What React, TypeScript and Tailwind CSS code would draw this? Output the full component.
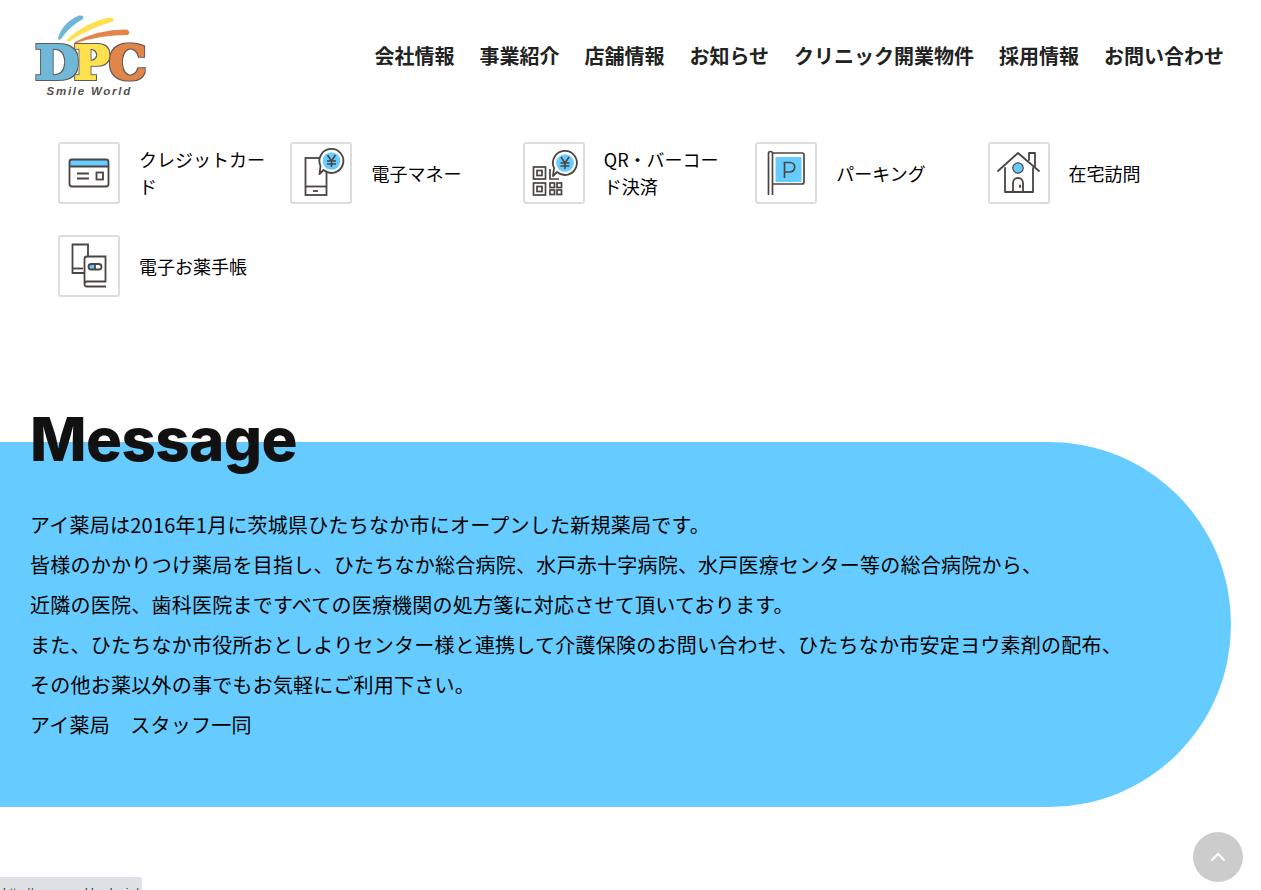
import React from 'react';

const navItems = ['会社情報', '事業紹介', '店舗情報', 'お知らせ', 'クリニック開業物件', '採用情報', 'お問い合わせ'];

const messageLines = [
  'アイ薬局は2016年1月に茨城県ひたちなか市にオープンした新規薬局です。',
  '皆様のかかりつけ薬局を目指し、ひたちなか総合病院、水戸赤十字病院、水戸医療センター等の総合病院から、',
  '近隣の医院、歯科医院まですべての医療機関の処方箋に対応させて頂いております。',
  'また、ひたちなか市役所おとしよりセンター様と連携して介護保険のお問い合わせ、ひたちなか市安定ヨウ素剤の配布、',
  'その他お薬以外の事でもお気軽にご利用下さい。',
  'アイ薬局　スタッフ一同',
];

const ink = '#4a4442';
const blue = '#66ccff';

const YenBubble: React.FC<{ cx: number; cy: number }> = ({ cx, cy }) => (
  <g>
    <path
      d={`M${cx - 8} ${cy + 9} A12 12 0 1 0 ${cx - 11} ${cy + 5} L${cx - 12} ${cy + 13} Z`}
      fill="#fff"
      stroke={ink}
      strokeWidth="1.8"
      strokeLinejoin="round"
    />
    <circle cx={cx} cy={cy} r="8.8" fill={blue} />
    <path
      d={`M${cx - 4} ${cy - 6} L${cx} ${cy} L${cx + 4} ${cy - 6} M${cx} ${cy} V${cy + 6} M${cx - 4.5} ${cy} H${cx + 4.5} M${cx - 4.5} ${cy + 3} H${cx + 4.5}`}
      fill="none"
      stroke={ink}
      strokeWidth="1.6"
    />
  </g>
);

const CardIcon = () => (
  <g fill="none" stroke={ink} strokeWidth="1.8">
    <path d="M12 24 V20 a2 2 0 0 1 2 -2 H49 a2 2 0 0 1 2 2 V24 Z" fill={blue} stroke="none" />
    <rect x="11.5" y="17.5" width="39" height="27" rx="2.5" />
    <path d="M12 24.5 H50" />
    <path d="M19 31.5 H31 M19 36.5 H31" />
    <rect x="38.5" y="30.5" width="6.5" height="7" />
  </g>
);

const PhoneIcon = () => (
  <g>
    <g fill="none" stroke={ink} strokeWidth="1.8">
      <rect x="15.5" y="16" width="21" height="37" />
      <path d="M16 44.5 H36" />
      <path d="M23 49 H28" />
    </g>
    <YenBubble cx={41.5} cy={19} />
  </g>
);

const QrIcon = () => (
  <g>
    <g fill="none" stroke={ink} strokeWidth="1.7">
      <rect x="10.5" y="25" width="12" height="12" />
      <rect x="14" y="28.5" width="5" height="5" />
      <rect x="10.5" y="41" width="12" height="12" />
      <rect x="14" y="44.5" width="5" height="5" />
      <rect x="27" y="41" width="4.5" height="4.5" />
      <rect x="34" y="41" width="4.5" height="4.5" />
      <rect x="27" y="48" width="4.5" height="4.5" />
      <rect x="34" y="48" width="4.5" height="4.5" />
      <path d="M27 27 V37 H36" />
    </g>
    <YenBubble cx={42} cy={21} />
  </g>
);

const ParkingIcon = () => (
  <g fill="none" stroke={ink} strokeWidth="1.7">
    <path d="M13.5 53 V11.5 a2 2 0 0 1 4 0 V53" />
    <path d="M17.5 11 H47 a2 2 0 0 1 2 2 V40 a2 2 0 0 1 -2 2 H17.5" />
    <rect x="20.5" y="15" width="26" height="25" fill={blue} stroke="none" />
    <path d="M29.5 36 V20.5 H35 a4.7 4.7 0 0 1 0 9.5 H29.5" />
  </g>
);

const HouseIcon = () => (
  <g fill="none" stroke={ink} strokeWidth="1.8" strokeLinecap="round" strokeLinejoin="round">
    <path d="M10 29 L30 11 L51 29" />
    <path d="M41 18 V11 H47 V25" />
    <path d="M17 26 V50 H45 V26" />
    <circle cx="30" cy="26" r="5.2" fill={blue} strokeWidth="1.2" />
    <path d="M25 50 V41 a5 5 0 0 1 10 0 V50" />
    <path d="M32 43.5 V45" />
  </g>
);

const NotebookIcon = () => (
  <g fill="none" stroke={ink} strokeWidth="1.8">
    <path d="M26 38 H14.5 V9.5 H30 V21" />
    <path d="M15 33.5 H25" />
    <path d="M26.5 48 V24 a2.5 2.5 0 0 1 2.5 -2.5 H47.5 V46.5 H29 a2.5 2.5 0 0 0 -2.5 2.5 a2.5 2.5 0 0 0 2.5 2.5 H48" fill="#fff" />
    <path d="M31 29.5 H37 V34 H31 Z" fill={blue} stroke="none" />
    <rect x="30.5" y="29" width="13" height="5.5" rx="2.75" />
    <path d="M37 29 V34.5" />
  </g>
);

const features = [
  { id: 'card', label: 'クレジットカード', icon: <CardIcon /> },
  { id: 'emoney', label: '電子マネー', icon: <PhoneIcon /> },
  { id: 'qr', label: 'QR・バーコード決済', icon: <QrIcon /> },
  { id: 'parking', label: 'パーキング', icon: <ParkingIcon /> },
  { id: 'home', label: '在宅訪問', icon: <HouseIcon /> },
  { id: 'notebook', label: '電子お薬手帳', icon: <NotebookIcon /> },
];

const Logo = () => (
  <svg viewBox="33 14 114 84" className="w-[114px] h-[84px]">
    <defs>
      <filter id="chunky" x="-20%" y="-20%" width="140%" height="140%">
        <feMorphology in="SourceGraphic" operator="dilate" radius="0.9" result="fat" />
        <feMorphology in="SourceAlpha" operator="dilate" radius="2.1" result="wide" />
        <feFlood floodColor="#5d5a58" />
        <feComposite in2="wide" operator="in" result="outline" />
        <feMerge>
          <feMergeNode in="outline" />
          <feMergeNode in="fat" />
        </feMerge>
      </filter>
    </defs>
    <path d="M58 38 Q63 22 79 15.5 Q85 15 83 19 Q70 26 61 39 Q58 41 58 38 Z" fill="#6fb7d8" />
    <path d="M66.5 40 Q86 22 110 17.5 Q115 18 113 21.5 Q92 27 70 41 Q66 42 66.5 40 Z" fill="#ffe14f" />
    <path d="M74.5 42 Q100 29 127 29.5 Q131 32 128 35 Q100 35 77 43 Q74 43 74.5 42 Z" fill="#e2854a" />
    <g fontFamily="'DejaVu Serif', serif" fontWeight="700" fontSize="47" filter="url(#chunky)">
      <text transform="translate(35 79) scale(1.08 1)" fill="#6fb7d8">D</text>
      <text x="74" y="79" fill="#ffe14f">P</text>
      <text x="109" y="79" fill="#e2854a">C</text>
    </g>
    <text x="46.5" y="95" fontFamily="'Liberation Sans', sans-serif" fontWeight="700" fontStyle="italic" fontSize="11.5" letterSpacing="1.75" fill="#55504e">
      Smile World
    </text>
  </svg>
);

export default function App() {
  return (
    <div className="relative h-[890px] overflow-hidden bg-white text-[#111] font-['Noto_Sans_CJK_JP','Noto_Sans',sans-serif]">
      <header className="h-[112px] flex items-center justify-between pl-[33px] pr-[37px]">
        <Logo />
        <nav className="flex items-center gap-[25px] text-[20px] font-bold text-[#222]">
          {navItems.map(item => (
            <a key={item} className="whitespace-nowrap">{item}</a>
          ))}
        </nav>
      </header>

      <section className="pt-[30px] pl-[58px] grid grid-cols-[repeat(5,232.4px)] gap-y-[31px]">
        {features.map(f => (
          <div key={f.id} className="flex items-center gap-[19px]">
            <div className="w-[62px] h-[62px] shrink-0 border-2 border-[#ddd] rounded-[3px]">
              <svg viewBox="2 2 58 58" className="w-[58px] h-[58px]">{f.icon}</svg>
            </div>
            <span className="w-[130px] text-[18px] leading-[27px] text-black">{f.label}</span>
          </div>
        ))}
      </section>

      <section className="flow-root mt-[145px] mr-[30px] h-[365px] rounded-r-[182px] bg-[#66ccff] pl-[30px]">
        <h2 className="-mt-[48px] h-[111px] text-[60px] leading-[90px] font-extrabold text-[#111] font-['Inter',sans-serif] tracking-[-0.6px]">
          Message
        </h2>
        <div className="text-[20px] leading-[40px] tracking-[0.24px] text-black">
          {messageLines.map(line => (
            <p key={line}>{line}</p>
          ))}
        </div>
      </section>

      <div className="absolute left-0 bottom-0 w-[142px] h-[13px] overflow-hidden bg-[#dee1e6] rounded-tr-[3px] pl-[3px] text-[12px] leading-[32px] whitespace-nowrap text-[#333] font-['Liberation_Sans',sans-serif]">
        http://www.a-yakkyoku.jp/
      </div>

      <button className="absolute left-[1193px] top-[832px] w-[50px] h-[50px] rounded-full bg-[#cccccc] flex items-center justify-center">
        <svg viewBox="0 0 16 10" className="w-[16px] h-[10px]">
          <path d="M1.5 8.5 L8 2 L14.5 8.5" fill="none" stroke="#fff" strokeWidth="2" />
        </svg>
      </button>
    </div>
  );
}
